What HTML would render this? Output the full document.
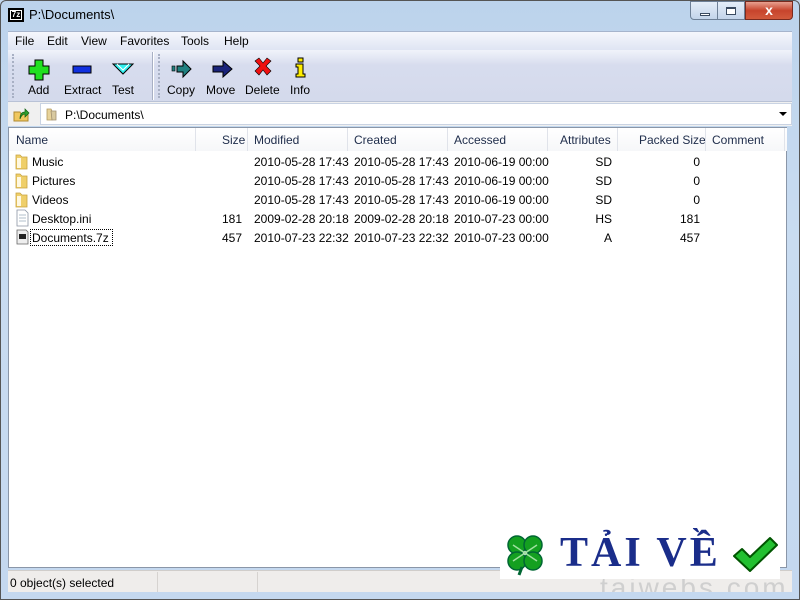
<!DOCTYPE html>
<html><head><meta charset="utf-8"><style>
*{margin:0;padding:0;box-sizing:border-box}
body{width:800px;height:600px;overflow:hidden;position:relative;font-family:"Liberation Sans",sans-serif;font-size:12px;color:#000;background:#c2d7ee}
.abs{position:absolute}
#frame{left:0;top:0;width:800px;height:600px;background:linear-gradient(#bcd3ec,#c9dcf1 40%,#c4d8ef);border:1px solid #555;border-radius:6px 6px 0 0}
#title{left:29px;top:7px;font-size:13px}
#menu{left:8px;top:31px;width:784px;height:19px;background:linear-gradient(#f5f7fc,#dfe5f3);border-top:1px solid #a6b4cc}
#menu span{position:absolute;top:2px;font-size:12px}
#tb{left:8px;top:50px;width:784px;height:52px;background:linear-gradient(#f0f3fa 0,#d7dcee 30%,#d4daec);border-bottom:1px solid #b9c2d6}
.btn{position:absolute;top:33px;font-size:12px;color:#000}
#addr{left:8px;top:102px;width:784px;height:24px;background:#f0f0f0}
#addrbox{left:40px;top:103px;width:752px;height:22px;background:#fff;border:1px solid #c9d3e3}
#list{left:8px;top:127px;width:779px;height:441px;background:#fff;border:1px solid #8a96a8}
#hdr{left:9px;top:128px;width:778px;height:23px;background:linear-gradient(#fff,#f6f7f9)}
.hc{position:absolute;top:5px;color:#1e2c4a}
.sep{position:absolute;top:0;width:1px;height:23px;background:#e0e3ea}
.r{position:absolute;font-size:12px;white-space:nowrap}
.m{top:153px;line-height:19px}
#sb{left:8px;top:570px;width:784px;height:22px;background:#efedeb;border-top:1px solid #d0cdca}
</style></head><body>
<div id="frame" class="abs"></div>
<div class="abs" style="left:8px;top:8px;width:16px;height:14px;background:#000;border:1px solid #000"><div style="position:absolute;left:1px;top:1px;width:12px;height:10px;border:1px solid #fff;color:#fff;font:bold 8px 'Liberation Sans';line-height:8px;text-align:center">7z</div></div>
<div id="title" class="abs">P:\Documents\</div>
<div class="abs" style="left:690px;top:1px;width:28px;height:19px;border:1px solid #6d7f96;border-radius:0 0 0 4px;background:linear-gradient(#e4edf8,#c3d4ea)"><div style="position:absolute;left:9px;top:11px;width:10px;height:3px;background:#fff;border:1px solid #3a4a60"></div></div>
<div class="abs" style="left:718px;top:1px;width:27px;height:19px;border:1px solid #6d7f96;border-left:0;background:linear-gradient(#e4edf8,#c3d4ea)"><div style="position:absolute;left:8px;top:5px;width:10px;height:8px;border:1px solid #3a4a60;border-top-width:2px;background:#fff"></div></div>
<div class="abs" style="left:745px;top:1px;width:48px;height:19px;border:1px solid #7a2a1e;border-radius:0 0 4px 0;background:linear-gradient(#e8a090,#c7442c 50%,#d25a3c)"><div style="position:absolute;left:0;width:46px;top:0;text-align:center;color:#fff;font:bold 14px 'Liberation Sans';line-height:17px">x</div></div>
<div id="menu" class="abs">
<span style="left:7px">File</span><span style="left:39px">Edit</span><span style="left:73px">View</span><span style="left:112px">Favorites</span><span style="left:173px">Tools</span><span style="left:216px">Help</span></div>
<div id="tb" class="abs">
<div style="position:absolute;left:4px;top:4px;width:2px;height:44px;border-left:2px dotted #a8b0c4"></div>
<div style="position:absolute;left:144px;top:2px;width:2px;height:48px;border-left:1px solid #a8b0c4;border-right:1px solid #fff"></div>
<div style="position:absolute;left:150px;top:4px;width:2px;height:44px;border-left:2px dotted #a8b0c4"></div>
<svg style="position:absolute;left:0;top:0" width="320" height="52">
<path d="M27 10h8v6h6v8h-6v6h-8v-6h-6v-8h6z" fill="#20e020" stroke="#000"/>
<rect x="65" y="16" width="18" height="7" fill="#1030e0" stroke="#000"/>
<path d="M105 14h20l-10 10z" fill="#30f0f0" stroke="#000"/>
<path d="M109 14l6 6 6-6" fill="none" stroke="#fff"/>
<rect x="164" y="16" width="3" height="5" fill="#208080" stroke="#000" stroke-width=".6"/>
<path d="M169 16h6v-5l8 8-8 8v-5h-6z" fill="#208080" stroke="#000"/>
<path d="M205 16h10v-5l9 8-9 8v-5h-10z" fill="#1a237a" stroke="#000"/>
<path d="M247 11l4-3 4 5 4-5 4 3-5 5 5 5-4 4-4-5-4 5-4-4 5-5z" fill="#f01010" stroke="#000" stroke-width=".6"/>
<rect x="290" y="8" width="5" height="4" fill="#ffee00" stroke="#000"/>
<path d="M288 14h7v10h2v3h-9v-3h2v-7h-2z" fill="#ffee00" stroke="#000"/>
</svg>
<span class="btn" style="left:20px">Add</span><span class="btn" style="left:56px">Extract</span><span class="btn" style="left:104px">Test</span>
<span class="btn" style="left:159px">Copy</span><span class="btn" style="left:198px">Move</span><span class="btn" style="left:237px">Delete</span><span class="btn" style="left:282px">Info</span>
</div>
<div id="addr" class="abs"></div>
<svg class="abs" style="left:12px;top:105px" width="20" height="18"><path d="M2 7h6l1 2h7v7H2z" fill="#f0c860" stroke="#b08a30"/><path d="M8 14c0-5 2-7 5-7V4l4 4-4 4V9c-2 0-4 2-5 5z" fill="#30a030" stroke="#106010" stroke-width=".7"/></svg>
<div id="addrbox" class="abs"></div>
<svg class="abs" style="left:45px;top:106px" width="14" height="16"><path d="M2 3h4l1 2v9H2z" fill="#e8d39a" stroke="#b09860" stroke-width=".8"/><path d="M6 5h5v9H7z" fill="#d8c9a0" stroke="#a09070" stroke-width=".8"/></svg>
<div class="abs" style="left:65px;top:108px;font-size:12px">P:\Documents\</div>
<div class="abs" style="left:779px;top:112px;width:0;height:0;border-left:4px solid transparent;border-right:4px solid transparent;border-top:4px solid #000"></div>
<div id="list" class="abs"></div>
<div id="hdr" class="abs">
<span class="hc" style="left:7px">Name</span><span class="sep" style="left:186px"></span>
<span class="hc" style="left:213px">Size</span><span class="sep" style="left:238px"></span>
<span class="hc" style="left:245px">Modified</span><span class="sep" style="left:338px"></span>
<span class="hc" style="left:345px">Created</span><span class="sep" style="left:438px"></span>
<span class="hc" style="left:445px">Accessed</span><span class="sep" style="left:538px"></span>
<span class="hc" style="left:551px">Attributes</span><span class="sep" style="left:608px"></span>
<span class="hc" style="left:630px">Packed Size</span><span class="sep" style="left:696px"></span>
<span class="hc" style="left:703px">Comment</span><span class="sep" style="left:775px"></span>
</div>
<svg class="abs" style="left:14px;top:153px" width="16" height="95">
<g fill="#efcf6a" stroke="#c9a440" stroke-width=".8"><path d="M2 2h4l2 2h5v12H2z"/><path d="M2 21h4l2 2h5v12H2z"/><path d="M2 40h4l2 2h5v12H2z"/></g>
<g fill="#fff8e0"><rect x="3" y="5" width="4" height="10"/><rect x="3" y="24" width="4" height="10"/><rect x="3" y="43" width="4" height="10"/></g>
<path d="M3 57h8l3 3v13H3z" fill="#fff" stroke="#8a94a4" stroke-width=".8"/><path d="M5 62h7M5 65h7M5 68h7" stroke="#9ab" stroke-width=".7"/>
<path d="M3 77h9l2 2v12H3z" fill="#eee" stroke="#666" stroke-width=".8"/><rect x="5" y="81" width="7" height="5" fill="#222"/>
</svg>
<div class="r" style="left:32px;top:155px">Music</div>
<div class="r" style="left:32px;top:174px">Pictures</div>
<div class="r" style="left:32px;top:193px">Videos</div>
<div class="r" style="left:32px;top:212px">Desktop.ini</div>
<div class="abs" style="left:30px;top:229px;width:83px;height:17px;border:1px dotted #000"></div>
<div class="r" style="left:32px;top:231px">Documents.7z</div>
<div class="r" style="left:222px;top:212px">181</div><div class="r" style="left:222px;top:231px">457</div>
<div class="r m" style="left:254px">2010-05-28 17:43<br>2010-05-28 17:43<br>2010-05-28 17:43<br>2009-02-28 20:18<br>2010-07-23 22:32</div>
<div class="r m" style="left:354px">2010-05-28 17:43<br>2010-05-28 17:43<br>2010-05-28 17:43<br>2009-02-28 20:18<br>2010-07-23 22:32</div>
<div class="r m" style="left:454px">2010-06-19 00:00<br>2010-06-19 00:00<br>2010-06-19 00:00<br>2010-07-23 00:00<br>2010-07-23 00:00</div>
<div class="r m" style="left:560px;width:52px;text-align:right">SD<br>SD<br>SD<br>HS<br>A</div>
<div class="r m" style="left:640px;width:60px;text-align:right">0<br>0<br>0<br>181<br>457</div>
<div id="sb" class="abs">
<div style="position:absolute;left:2px;top:5px">0 object(s) selected</div>
<div style="position:absolute;left:149px;top:1px;width:1px;height:20px;background:#d6d3d0"></div>
<div style="position:absolute;left:249px;top:1px;width:1px;height:20px;background:#d6d3d0"></div>
</div>
<div class="abs" style="left:600px;top:578px;width:190px;height:14px;overflow:hidden"><div style="font:28px 'Liberation Sans';color:#cfcfcf;letter-spacing:3px;line-height:24px;margin-top:-2px">taiwebs.com</div></div>
<div class="abs" style="left:500px;top:531px;width:280px;height:48px;background:#fff"></div>
<svg class="abs" style="left:500px;top:531px" width="60" height="48">
<g fill="#14a020" stroke="#063" stroke-width="1.5"><circle cx="17" cy="14" r="9"/><circle cx="33" cy="14" r="9"/><circle cx="17" cy="30" r="9"/><circle cx="33" cy="30" r="9"/></g>
<path d="M25 22l-12 -8M25 22l12-8M25 22l-12 8M25 22l12 8" stroke="#9fe09f" stroke-width="1.5"/>
<path d="M22 36l-3 8" stroke="#063" stroke-width="3"/>
</svg>
<div class="abs" style="left:560px;top:530px;font:bold 42px 'Liberation Serif';color:#1a2d8a;letter-spacing:3px;line-height:46px">TẢI VỀ</div>
<svg class="abs" style="left:730px;top:536px" width="50" height="40"><path d="M4 20l8-7 8 8 20-19 7 7-27 26z" fill="#22c030" stroke="#050" stroke-width="2" stroke-linejoin="round"/></svg>
</body></html>
